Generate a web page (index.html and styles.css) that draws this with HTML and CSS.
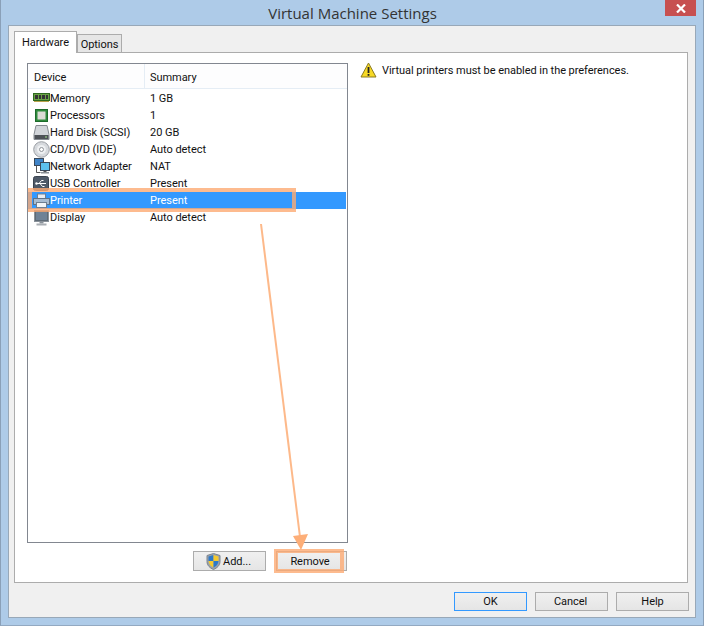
FILE: index.html
```html
<!DOCTYPE html>
<html lang="en">
<head>
    <meta charset="UTF-8">
    <title>Virtual Machine Settings</title>
    <link rel="stylesheet" href="styles.css">
</head>
<body>

    <div class="window">
        <div class="titlebar">
            <span class="title">Virtual Machine Settings</span>
            <div class="close">
                <svg width="10" height="9" viewBox="0 0 10 9"><path d="M1 .5l8 8M9 .5l-8 8" stroke="#fff" stroke-width="2.2" fill="none"/></svg>
            </div>
        </div>

        <div class="client">
            <div class="tabs">
                <div class="tab active">Hardware</div>
                <div class="tab">Options</div>
            </div>

            <div class="panel">
                <div class="left">
                    <div class="list">
                        <div class="list-head">
                            <div class="col-device">Device</div>
                            <div class="col-summary">Summary</div>
                        </div>

                        <div class="row">
                            <svg class="icon" width="17" height="16" viewBox="0 0 17 16"><rect x="0.5" y="2.5" width="16" height="7" fill="#6aa044" stroke="#2f6a1e"/><rect x="2" y="4" width="3" height="4" fill="#333"/><rect x="6" y="4" width="2" height="4" fill="#333"/><rect x="9" y="4" width="3" height="4" fill="#333"/><rect x="13" y="4" width="2" height="4" fill="#333"/><rect x="1" y="10" width="15" height="1" fill="#b9a24c"/></svg>
                            <div class="col-device">Memory</div>
                            <div class="col-summary">1 GB</div>
                        </div>
                        <div class="row">
                            <svg class="icon" width="17" height="16" viewBox="0 0 17 16"><rect x="2.500" y="1.500" width="12" height="12" fill="#2f8a3c" stroke="#1d6b2c"/><rect x="4.500" y="3.500" width="8" height="8" fill="#dcdcd6"/></svg>
                            <div class="col-device">Processors</div>
                            <div class="col-summary">1</div>
                        </div>
                        <div class="row">
                            <svg class="icon" width="17" height="16" viewBox="0 0 17 16"><path d="M3 .5h11l2 9v5H1v-5z" fill="#d2d5da" stroke="#858a91"/><rect x="1.500" y="10" width="14" height="4" fill="#4d5157"/><rect x="12" y="11.500" width="2" height="1" fill="#9fe08a"/></svg>
                            <div class="col-device">Hard Disk (SCSI)</div>
                            <div class="col-summary">20 GB</div>
                        </div>
                        <div class="row">
                            <svg class="icon" width="17" height="17" viewBox="0 0 17 17"><circle cx="8.500" cy="8.500" r="7.800" fill="#d6d9dd" stroke="#9a9ea4"/><circle cx="8.500" cy="8.500" r="4.500" fill="#eef0f2"/><circle cx="8.500" cy="8.500" r="2" fill="#fff" stroke="#8f9399"/></svg>
                            <div class="col-device">CD/DVD (IDE)</div>
                            <div class="col-summary">Auto detect</div>
                        </div>
                        <div class="row">
                            <svg class="icon" width="17" height="17" viewBox="0 0 17 17"><path d="M3.500 8v6.500h4" stroke="#555" fill="none"/><rect x="1.500" y="0.500" width="9" height="7" fill="#3f83c7" stroke="#39485a"/><rect x="7.500" y="4.500" width="9" height="8" fill="#5cc0ee" stroke="#39485a"/><rect x="10.500" y="13" width="3" height="1" fill="#555"/><rect x="8" y="14" width="8" height="1.500" fill="#8a8f95"/></svg>
                            <div class="col-device">Network Adapter</div>
                            <div class="col-summary">NAT</div>
                        </div>
                        <div class="row">
                            <svg class="icon" width="17" height="16" viewBox="0 0 17 16"><rect x="0.500" y="0.500" width="15" height="14" rx="2" fill="#4f5a68" stroke="#3a434f"/><path d="M3 7.500h10M6 7.500l2.500-3h2M7 7.500l2.500 3h2" stroke="#fff" fill="none"/><circle cx="3.500" cy="7.500" r="1.200" fill="#fff"/></svg>
                            <div class="col-device">USB Controller</div>
                            <div class="col-summary">Present</div>
                        </div>
                        <div class="row selected">
                            <svg class="icon" width="17" height="16" viewBox="0 0 17 16"><rect x="4.500" y="1" width="8" height="5" fill="#e8edf3" stroke="#6e7f92"/><rect x="0.500" y="5.500" width="16" height="6" fill="#a9bdd2" stroke="#5f7288"/><rect x="3.500" y="9.500" width="10" height="5" fill="#f2f5f8" stroke="#6e7f92"/></svg>
                            <div class="col-device">Printer</div>
                            <div class="col-summary">Present</div>
                        </div>
                        <div class="row">
                            <svg class="icon" width="17" height="16" viewBox="0 0 17 16"><rect x="1.500" y="0.500" width="14" height="11" fill="#5f6b76" stroke="#8a929a"/><rect x="3" y="2" width="11" height="8" fill="#6f8296"/><rect x="6.500" y="12" width="4" height="1.500" fill="#8a929a"/><rect x="3.500" y="13.500" width="10" height="2" fill="#a9aeb3"/></svg>
                            <div class="col-device">Display</div>
                            <div class="col-summary">Auto detect</div>
                        </div>
                    </div>

                    <div class="list-buttons">
                        <button class="btn btn-add">
                            <svg width="15" height="17" viewBox="0 0 15 17"><path d="M7.500.5L14 2.500v6c0 4-3 6.500-6.500 8C4 15 1 12.500 1 8.500v-6z" fill="#9aa3ad" stroke="#7d858e"/><path d="M7.500 2L2.500 3.500v4.500h5z" fill="#2c79c9"/><path d="M7.500 2l5 1.500v4.500h-5z" fill="#f5c92e"/><path d="M2.500 8h5v6.500C5 13.500 2.800 11.500 2.500 8z" fill="#f5c92e"/><path d="M7.500 8h5c-.3 3.500-2.500 5.500-5 6.500z" fill="#2c79c9"/></svg>
                            Add...
                        </button>
                        <button class="btn btn-remove">Remove</button>
                    </div>
                </div>

                <div class="note">
                    <svg width="17" height="16" viewBox="0 0 17 16"><path d="M8.500 1L16 15H1z" fill="#f7d925" stroke="#8a7a20" stroke-linejoin="round"/><rect x="7.600" y="5" width="1.800" height="6" fill="#222"/><rect x="7.600" y="12" width="1.800" height="1.800" fill="#222"/></svg>
                    <span>Virtual printers must be enabled in the preferences.</span>
                </div>
            </div>

            <div class="footer">
                <button class="btn btn-ok">OK</button>
                <button class="btn btn-cancel">Cancel</button>
                <button class="btn">Help</button>
            </div>
        </div>

        <!-- annotation drawn on top of the screenshot -->
        <div class="mark mark-row"></div>
        <div class="mark mark-remove"></div>
        <svg class="arrow" width="704" height="626" viewBox="0 0 704 626">
            <path d="M261 224L300 537" stroke="#fdb98a" stroke-width="2" fill="none"/>
            <path d="M293 536L308 534L301 550z" fill="#fdae78"/>
        </svg>
    </div>

</body>
</html>
```

FILE: styles.css
```css
body {
    margin: 0;
    font-family: Roboto, 'Liberation Sans', sans-serif;
    font-size: 11px;
    letter-spacing: -0.05px;
    color: #111;
}

.window {
    position: relative;
    width: 704px;
    height: 626px;
    box-sizing: border-box;
    padding: 0 7px 7px 7px;
    background: #aecbe8;
    border: 1px solid #8aa0b8;
    border-top: none;
    border-bottom: 1px solid #93a9c1;
    display: flex;
    flex-direction: column;
    overflow: hidden;
}

.titlebar {
    position: relative;
    height: 25px;
    flex: none;
    display: flex;
    justify-content: center;
    align-items: center;
}

.title {
    font-family: 'Open Sans', sans-serif;
    font-size: 15px;
    letter-spacing: 0;
    color: #333;
    margin-left: 1px;
    padding-top: 1px;
}

.close {
    position: absolute;
    right: 0;
    top: 0;
    width: 31px;
    height: 16px;
    background: #c75050;
    display: flex;
    justify-content: center;
    align-items: center;
}

.client {
    flex: 1;
    background: #f0f0f0;
    border: 1px solid #98a8b8;
    padding: 5px 7px 6px 5px;
    display: flex;
    flex-direction: column;
    min-height: 0;
}

.tabs {
    display: flex;
    align-items: flex-end;
    height: 21px;
    flex: none;
    position: relative;
    z-index: 1;
}

.tab {
    height: 18px;
    width: 45px;
    box-sizing: border-box;
    border: 1px solid #acacac;
    border-bottom: none;
    background: #e6e6e6;
    text-align: center;
    line-height: 20px;
}

.tab.active {
    width: 63px;
    height: 22px;
    line-height: 21px;
    background: #fff;
    margin-bottom: -1px;
}

.panel {
    flex: 1;
    min-height: 0;
    background: #fff;
    border: 1px solid #acacac;
    padding: 10px 0 0 12px;
    display: flex;
}

.left {
    width: 321px;
    flex: none;
}

.list {
    height: 480px;
    box-sizing: border-box;
    border: 1px solid #828790;
    background: #fff;
}

.list-head {
    display: flex;
    height: 24px;
    border-bottom: 1px solid #e5edf5;
    margin-bottom: 1px;
    background: #fdfdfe;
    line-height: 27px;
}

.list-head .col-device {
    width: 110px;
    padding-left: 6px;
    border-right: 1px solid #e5edf5;
}

.list-head .col-summary {
    padding-left: 5px;
}

.row {
    display: flex;
    align-items: center;
    height: 17px;
    margin-right: 1px;
    white-space: nowrap;
}

.row .icon {
    width: 17px;
    margin-left: 5px;
    flex: none;
}

.row .col-device {
    width: 94px;
}

.row .col-summary {
    margin-left: 6px;
}

.row.selected {
    background: #3399ff;
    color: #fff;
}

.list-buttons {
    display: flex;
    justify-content: flex-end;
    gap: 10px;
    margin-top: 8px;
    margin-right: 1px;
}

.btn {
    width: 73px;
    height: 20px;
    padding: 0;
    box-sizing: border-box;
    border: 1px solid #acacac;
    background: linear-gradient(#f0f0f0, #e5e5e5);
    font-family: inherit;
    font-size: 11px;
    letter-spacing: inherit;
    color: #111;
    display: flex;
    justify-content: center;
    align-items: center;
    gap: 2px;
}

.btn-add {
    padding-right: 2px;
}

.btn-remove {
    width: 71px;
    padding-right: 3px;
}

.btn-ok {
    border-color: #3399ff;
}

.btn-cancel {
    padding-right: 2px;
}

.note {
    display: flex;
    align-items: center;
    gap: 5px;
    margin: -1px 0 0 12px;
    height: 16px;
}

.footer {
    flex: none;
    display: flex;
    justify-content: flex-end;
    gap: 8px;
    margin: 9px -1px 0 0;
    height: 19px;
}

.footer .btn {
    height: 19px;
}

.mark {
    position: absolute;
    box-sizing: border-box;
    border: 4px solid rgba(253, 170, 115, 0.8);
}

.mark-row {
    left: 27px;
    top: 188px;
    width: 268px;
    height: 24px;
}

.mark-remove {
    left: 273px;
    top: 549px;
    width: 70px;
    height: 24px;
}

.arrow {
    position: absolute;
    left: -1px;
    top: 0;
    pointer-events: none;
}
```
